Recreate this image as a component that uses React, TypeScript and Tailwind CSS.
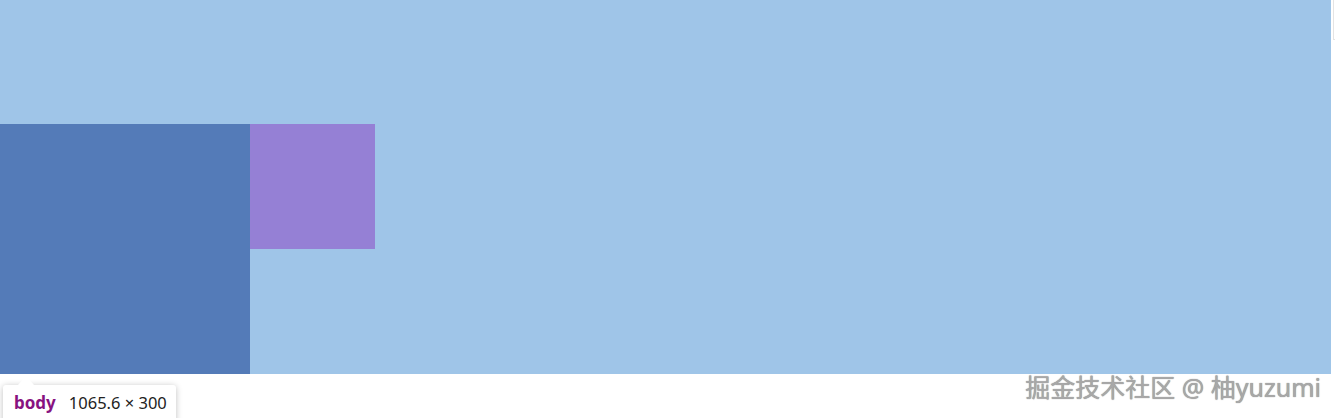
export default function App() {
  return (
    <div className="relative w-[1335px] h-[418px] overflow-hidden bg-white font-['Noto_Sans',sans-serif]">
      {/* page body */}
      <div className="flex h-[374px] w-[1331px] items-end bg-[#9fc5e8]">
        <div className="flex items-start">
          <div className="h-[250px] w-[250px] bg-[#547bb8]" />
          <div className="h-[125px] w-[125px] bg-[#9580d5]" />
        </div>
      </div>

      {/* right edge scrollbar bit */}
      <div className="absolute right-0 top-0 h-[40px] w-[2px] border-l border-b border-[#e4e4e4]" />

      {/* devtools tooltip */}
      <div className="absolute left-[3px] top-[385px] flex h-[40px] w-[173px] items-start whitespace-nowrap rounded-[3px] bg-white px-[11px] pt-[6px] shadow-[0_1px_6px_rgba(0,0,0,0.25)]">
        <span className="text-[17px] font-bold leading-[24px] text-[#881280]">body</span>
        <span className="ml-[13px] text-[16.5px] leading-[24px] text-[#222]">1065.6 × 300</span>
      </div>
      <div className="absolute left-[18px] top-[376px] h-0 w-0 border-x-[8px] border-b-[9px] border-x-transparent border-b-white" />

      {/* watermark */}
      <div className="absolute right-[14px] top-[371px] whitespace-nowrap text-[25px] leading-[32px] text-[#a8a8a8] [text-shadow:0_0_1px_#7a7a7a] font-['Noto_Sans','Noto_Sans_CJK_SC',sans-serif]">
        掘金技术社区 @ 柚yuzumi
      </div>
    </div>
  );
}
